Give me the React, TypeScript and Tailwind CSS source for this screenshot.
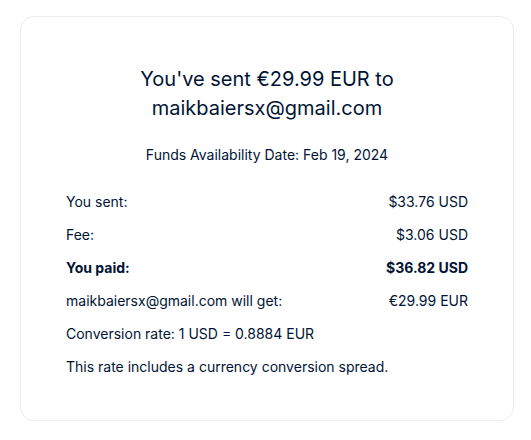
import React from "react";

const rows: { label: string; value: string; bold?: boolean }[] = [
  { label: "You sent:", value: "$33.76 USD" },
  { label: "Fee:", value: "$3.06 USD" },
  { label: "You paid:", value: "$36.82 USD", bold: true },
  { label: "maikbaiersx@gmail.com will get:", value: "€29.99 EUR" },
];

export default function App() {
  return (
    <div
      className="w-[531px] h-[440px] bg-white pt-[16px] pl-[20px]"
      style={{ fontFamily: "Inter, 'Noto Sans', sans-serif" }}
    >
      <div className="w-[494px] h-[405px] rounded-[14px] border border-[#ececec] bg-white px-[45px] pt-[48px] text-[#001435]">
        <h1 className="text-center text-[20px] leading-[29px] font-normal">
          You've sent €29.99 EUR to
          <br />
          maikbaiersx@gmail.com
        </h1>
        <p className="mt-[22px] text-center text-[14px] leading-[20px]">
          Funds Availability Date: Feb 19, 2024
        </p>
        <div className="mt-[27px] flex flex-col gap-[13px] text-[14px] leading-[20px]">
          {rows.map((r) => (
            <div
              key={r.label}
              className={`flex justify-between ${r.bold ? "font-bold" : ""}`}
            >
              <span>{r.label}</span>
              <span>{r.value}</span>
            </div>
          ))}
          <div>Conversion rate: 1 USD = 0.8884 EUR</div>
          <div>This rate includes a currency conversion spread.</div>
        </div>
      </div>
    </div>
  );
}
